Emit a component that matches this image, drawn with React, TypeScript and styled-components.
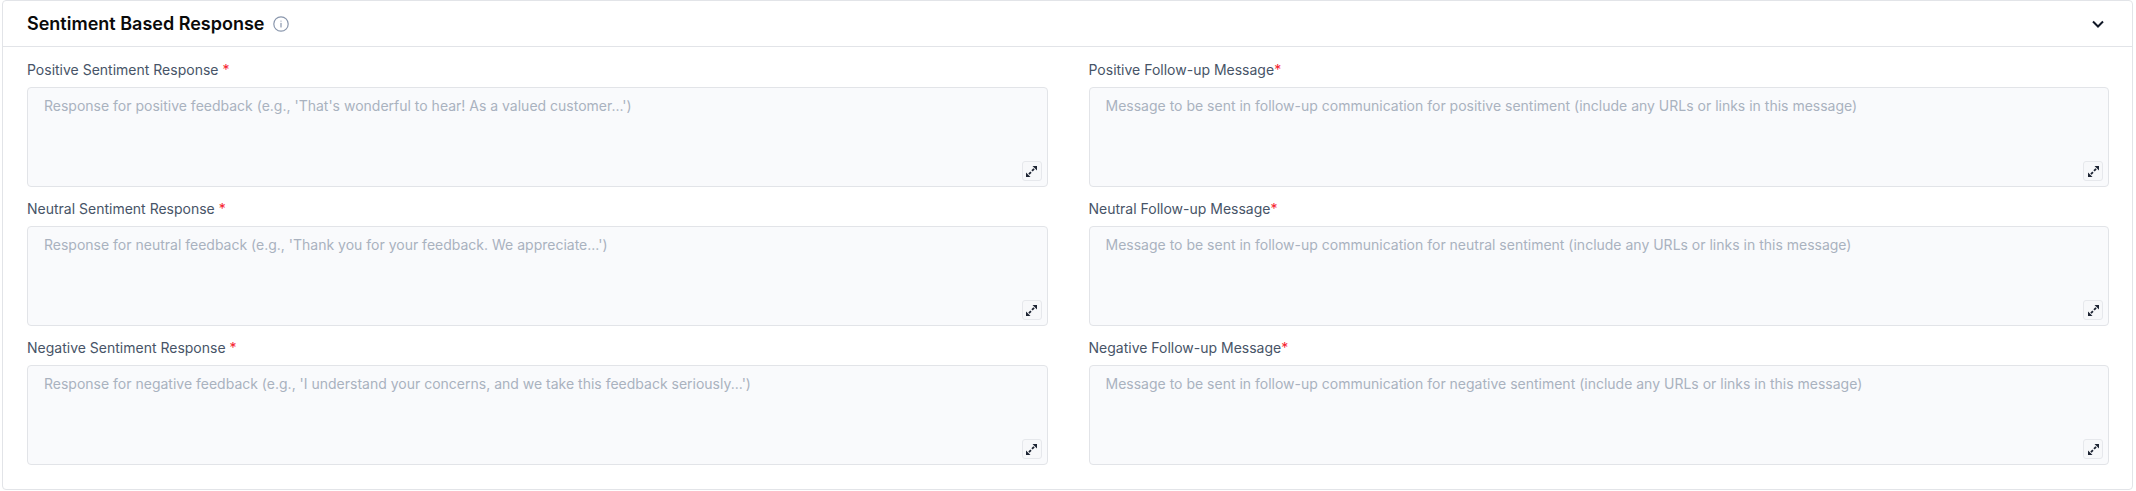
import * as React from 'react';
import styled, { createGlobalStyle } from 'styled-components';

const GlobalStyle = createGlobalStyle`
	* {
		box-sizing: border-box;
	}
	body {
		margin: 0;
		background: #ffffff;
		font-family: Inter, "Liberation Sans", sans-serif;
	}
`;

const Page = styled.div`
	padding: 0 3px 2px 2px;
`;

const Card = styled.section`
	height: 490px;
	background: #ffffff;
	border: 1px solid #e2e4e8;
	border-radius: 4px;
`;

const Header = styled.header`
	height: 46px;
	padding: 0 28px 0 24px;
	display: flex;
	align-items: center;
	justify-content: space-between;
	border-bottom: 1px solid #e2e4e8;
`;

const TitleRow = styled.div`
	display: flex;
	align-items: center;
	gap: 9px;
`;

const Title = styled.h3`
	margin: 0;
	font-size: 18px;
	line-height: 24px;
	font-weight: 600;
	color: #0a0a0a;
`;

const Body = styled.div`
	padding: 14px 23px 0 24px;
	display: grid;
	grid-template-columns: 1fr 1fr;
	column-gap: 41px;
	row-gap: 13px;
`;

const Field = styled.div`
	display: flex;
	flex-direction: column;
	gap: 9px;
`;

const Label = styled.label`
	font-size: 14px;
	line-height: 17px;
	font-weight: 400;
	color: #475467;
`;

const Required = styled.span`
	color: #f5222d;
`;

const AreaWrap = styled.div`
	position: relative;
	height: 100px;
`;

const TextArea = styled.textarea`
	display: block;
	width: 100%;
	height: 100%;
	padding: 8px 16px;
	resize: none;
	background: #f9fafc;
	border: 1px solid #e2e4e8;
	border-radius: 4px;
	font-family: inherit;
	font-size: 14px;
	line-height: 20px;
	color: #344054;

	&::placeholder {
		color: #a9b2bf;
		opacity: 1;
	}
`;

const ExpandButton = styled.button`
	position: absolute;
	right: 6px;
	bottom: 6px;
	width: 20px;
	height: 20px;
	padding: 0;
	display: flex;
	align-items: center;
	justify-content: center;
	background: #f7f8fa;
	border: 1px solid #e6e8ec;
	border-radius: 3px;
	color: #1d2433;
`;

const fields = [
	{
		label: 'Positive Sentiment Response',
		spaced: true,
		placeholder: "Response for positive feedback (e.g., 'That's wonderful to hear! As a valued customer...')",
	},
	{
		label: 'Positive Follow-up Message',
		spaced: false,
		placeholder: 'Message to be sent in follow-up communication for positive sentiment (include any URLs or links in this message)',
	},
	{
		label: 'Neutral Sentiment Response',
		spaced: true,
		placeholder: "Response for neutral feedback (e.g., 'Thank you for your feedback. We appreciate...')",
	},
	{
		label: 'Neutral Follow-up Message',
		spaced: false,
		placeholder: 'Message to be sent in follow-up communication for neutral sentiment (include any URLs or links in this message)',
	},
	{
		label: 'Negative Sentiment Response',
		spaced: true,
		placeholder: "Response for negative feedback (e.g., 'I understand your concerns, and we take this feedback seriously...')",
	},
	{
		label: 'Negative Follow-up Message',
		spaced: false,
		placeholder: 'Message to be sent in follow-up communication for negative sentiment (include any URLs or links in this message)',
	},
];

function InfoIcon() {
	return (
		<svg width="16" height="16" viewBox="0 0 16 16" fill="none" stroke="#8a97ad" strokeWidth="1.2" strokeLinecap="round">
			<circle cx="8" cy="8" r="7.2" />
			<path d="M8 7.4v3.6" />
			<path d="M8 5v.1" />
		</svg>
	);
}

function ChevronIcon() {
	return (
		<svg width="12" height="8" viewBox="0 0 12 8" fill="none" stroke="#111827" strokeWidth="2">
			<path d="M1 1.5l5 5 5-5" />
		</svg>
	);
}

function ExpandIcon() {
	return (
		<svg width="13" height="13" viewBox="0 0 13 13" fill="currentColor">
			<path d="M7.5 1H12v4.5z" />
			<path d="M5.5 12H1V7.5z" />
			<path d="M6.4 5.3l2-2 1.3 1.3-2 2z" />
			<path d="M3.3 8.4l2-2 1.3 1.3-2 2z" />
		</svg>
	);
}

export default function App() {
	return (
		<>
			<GlobalStyle />
			<Page>
				<Card>
					<Header>
						<TitleRow>
							<Title>Sentiment Based Response</Title>
							<InfoIcon />
						</TitleRow>
						<ChevronIcon />
					</Header>
					<Body>
						{fields.map(field => (
							<Field key={field.label}>
								<Label>
									{field.label}
									{field.spaced ? ' ' : ''}
									<Required>*</Required>
								</Label>
								<AreaWrap>
									<TextArea placeholder={field.placeholder} />
									<ExpandButton type="button">
										<ExpandIcon />
									</ExpandButton>
								</AreaWrap>
							</Field>
						))}
					</Body>
				</Card>
			</Page>
		</>
	);
}
